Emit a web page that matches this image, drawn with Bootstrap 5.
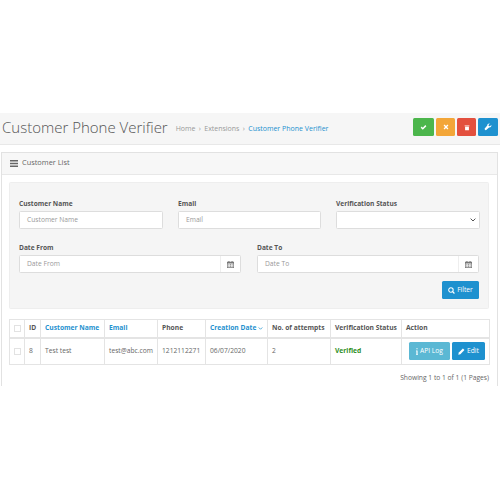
<!DOCTYPE html>
<html lang="en">
<head>
    <meta charset="UTF-8">
    <title>Customer Phone Verifier</title>
    <meta name="viewport" content="width=device-width, initial-scale=1" />
    <link href="https://cdn.jsdelivr.net/npm/bootstrap@5.3.0/dist/css/bootstrap.min.css" rel="stylesheet">
    <style>
        body {
            background-color: #fff;
            font-family: "Open Sans", sans-serif;
            font-size: 6.7px;
            color: #666;
            margin: 0;
            padding: 113px 0 0;
        }
        svg { fill: currentColor; display: inline-block; }
        .page-head {
            height: 32px;
            background-color: #f6f6f6;
            border-bottom: 1px solid #e8e8e8;
            padding: 0 2px;
        }
        .head-left { padding-bottom: 3px; }
        .page-title {
            font-family: "Open Sans", sans-serif;
            font-size: 15px;
            font-weight: 300;
            color: #555;
            margin: 0;
            line-height: 28px;
            white-space: nowrap;
        }
        .crumbs { font-size: 7px; color: #999; margin-left: 8px; padding-top: 4px; white-space: nowrap; }
        .crumbs a { color: #1e91cf; text-decoration: none; }
        .crumbs span { margin: 0 1.5px; }
        .top-btn {
            height: 18px;
            border-radius: 1.5px;
            color: #fff;
            display: flex;
            align-items: center;
            justify-content: center;
        }
        .b-green { width: 21px; background-color: #4cb64c; }
        .b-orange { width: 19px; background-color: #f3a638; }
        .b-red { width: 19px; background-color: #e3503e; }
        .b-blue { width: 20px; background-color: #1e91cf; }
        .top-btns { gap: 2px; padding-top: 5px; }
        .list-panel {
            margin: 7px 2px 0 1px;
            height: 234px;
            border: 1px solid #e2e2e2;
            border-bottom: 0;
        }
        .list-head {
            height: 22px;
            background-color: #f7f7f7;
            border-bottom: 1px solid #e8e8e8;
            padding-left: 8px;
            padding-bottom: 1px;
            font-size: 7.4px;
            color: #666;
            gap: 4px;
        }
        .list-body { padding: 7px 8px 0 7px; }
        .filter-box {
            height: 127px;
            background-color: #f5f5f5;
            border: 1px solid #eee;
            border-radius: 1.5px;
            padding: 16px 9px 0 9px;
        }
        .filter-row-3 { display: grid; grid-template-columns: 144px 143px 144px; column-gap: 15px; }
        .filter-row-2 { display: grid; grid-template-columns: 222px 222px; column-gap: 16px; margin-top: 14px; }
        .field-label { font-size: 6.6px; font-weight: 700; color: #555; line-height: 10px; margin-bottom: 2px; }
        .field-input {
            height: 18px;
            background-color: #fff;
            border: 1px solid #ddd;
            border-radius: 1.5px;
            padding: 0 7px;
            font-size: 6.7px;
            color: #999;
            line-height: 16px;
        }
        .field-select { padding: 0 3px 0 0; color: #555; }
        .field-date { padding: 0; }
        .field-date .date-text { flex: 1; padding: 0 7px; }
        .date-addon { width: 20px; border-left: 1px solid #eee; color: #777; }
        .filter-btn {
            width: 37px;
            height: 18px;
            background-color: #1e91cf;
            color: #fff;
            border-radius: 1.5px;
            font-size: 6.7px;
            gap: 2px;
            margin-top: 8px;
            margin-left: auto;
        }
        .data-table {
            width: 480px;
            margin-top: 10px;
            border-collapse: collapse;
            table-layout: fixed;
            font-size: 6.7px;
            color: #666;
        }
        .data-table th, .data-table td {
            border: 1px solid #e4e4e4;
            padding: 0 4px;
            white-space: nowrap;
        }
        .data-table th { height: 18px; font-weight: 700; color: #555; border-bottom-width: 2px; }
        .data-table td { height: 27px; }
        .data-table th a { color: #1e91cf; text-decoration: none; }
        .tick-box { width: 7px; height: 7px; border: 1px solid #e2e2e2; background-color: #fff; display: block; margin: 0 auto; }
        .state-ok { color: #2f8f1f; font-weight: 700; }
        .act-btn {
            height: 18px;
            color: #fff;
            border-radius: 1.5px;
            gap: 2px;
            font-size: 6.7px;
        }
        .act-log { width: 41px; background-color: #5bb8d4; }
        .act-edit { width: 33px; background-color: #1e91cf; }
        .act-row { gap: 2px; }
        .result-text { text-align: right; margin-top: 8px; font-size: 6.7px; color: #666; }
    </style>
</head>
<body>

<div class="page-head d-flex justify-content-between">
    <div class="head-left d-flex align-items-center">
        <h1 class="page-title">Customer Phone Verifier</h1>
        <div class="crumbs">Home <span>›</span> Extensions <span>›</span> <a href="#">Customer Phone Verifier</a></div>
    </div>
    <div class="d-flex top-btns">
        <div class="top-btn b-green"><svg width="7" height="7" viewBox="0 0 10 10"><path d="M1 5.2 2.5 3.7 4 5.2 7.6 1.6 9.1 3.1 4 8.2z"/></svg></div>
        <div class="top-btn b-orange"><svg width="6" height="6" viewBox="0 0 10 10"><path d="M2.6 1 5 3.4 7.4 1 9 2.6 6.6 5 9 7.4 7.4 9 5 6.6 2.6 9 1 7.4 3.4 5 1 2.6z"/></svg></div>
        <div class="top-btn b-red"><svg width="6" height="7" viewBox="0 0 10 10"><path d="M1 1.5h8v1.5H1zM1.8 3.6h6.4V9.5H1.8z"/></svg></div>
        <div class="top-btn b-blue"><svg width="8" height="8" viewBox="0 0 10 10"><path d="M9.2 2.6 7.4 4.2 5.9 3.8 5.6 2.4 7.3.7C5.6.2 4 1.4 4.1 3.2L.9 6.9C.2 7.7 1.9 9.6 2.8 8.8L6.3 5.6C8.1 5.9 9.6 4.4 9.2 2.6z"/></svg></div>
    </div>
</div>

<div class="list-panel">
    <div class="list-head d-flex align-items-center">
        <svg width="8" height="7" viewBox="0 0 8 7"><path d="M0 0h8v1.5H0zM0 2.75h8v1.5H0zM0 5.5h8V7H0z"/></svg>
        <span>Customer List</span>
    </div>
    <div class="list-body">
        <div class="filter-box">
            <div class="filter-row-3">
                <div>
                    <div class="field-label">Customer Name</div>
                    <div class="field-input">Customer Name</div>
                </div>
                <div>
                    <div class="field-label">Email</div>
                    <div class="field-input">Email</div>
                </div>
                <div>
                    <div class="field-label">Verification Status</div>
                    <div class="field-input field-select d-flex align-items-center justify-content-end">
                        <svg width="6" height="4" viewBox="0 0 6 4"><path d="M.6.6 3 3 5.4.6" fill="none" stroke="currentColor" stroke-width="1"/></svg>
                    </div>
                </div>
            </div>
            <div class="filter-row-2">
                <div>
                    <div class="field-label">Date From</div>
                    <div class="field-input field-date d-flex">
                        <div class="date-text">Date From</div>
                        <div class="date-addon d-flex align-items-center justify-content-center">
                            <svg width="7" height="7" viewBox="0 0 10 10"><path d="M2 0h1.5v1.2h3V0H8v1.2h2V10H0V1.2h2zM1 3.6V9h8V3.6z"/><path d="M2 4.6h1.4V6H2zM4.3 4.6h1.4V6H4.3zM6.6 4.6H8V6H6.6zM2 6.8h1.4v1.4H2zM4.3 6.8h1.4v1.4H4.3zM6.6 6.8H8v1.4H6.6z"/></svg>
                        </div>
                    </div>
                </div>
                <div>
                    <div class="field-label">Date To</div>
                    <div class="field-input field-date d-flex">
                        <div class="date-text">Date To</div>
                        <div class="date-addon d-flex align-items-center justify-content-center">
                            <svg width="7" height="7" viewBox="0 0 10 10"><path d="M2 0h1.5v1.2h3V0H8v1.2h2V10H0V1.2h2zM1 3.6V9h8V3.6z"/><path d="M2 4.6h1.4V6H2zM4.3 4.6h1.4V6H4.3zM6.6 4.6H8V6H6.6zM2 6.8h1.4v1.4H2zM4.3 6.8h1.4v1.4H4.3zM6.6 6.8H8v1.4H6.6z"/></svg>
                        </div>
                    </div>
                </div>
            </div>
            <div class="filter-btn d-flex align-items-center justify-content-center">
                <svg width="7" height="7" viewBox="0 0 10 10"><circle cx="4.2" cy="4.2" r="3.2" fill="none" stroke="currentColor" stroke-width="1.5"/><path d="M6.6 6.6 9.2 9.2" stroke="currentColor" stroke-width="1.8"/></svg>
                <span>Filter</span>
            </div>
        </div>

        <table class="data-table">
            <colgroup>
                <col style="width: 15px"><col style="width: 16px"><col style="width: 64px"><col style="width: 53px"><col style="width: 48px"><col style="width: 62px"><col style="width: 63px"><col style="width: 71px"><col style="width: 88px">
            </colgroup>
            <thead>
                <tr>
                    <th><span class="tick-box"></span></th>
                    <th>ID</th>
                    <th><a href="#">Customer Name</a></th>
                    <th><a href="#">Email</a></th>
                    <th>Phone</th>
                    <th><a href="#">Creation Date <svg width="5" height="3" viewBox="0 0 6 4"><path d="M.6.6 3 3 5.4.6" fill="none" stroke="currentColor"/></svg></a></th>
                    <th>No. of attempts</th>
                    <th>Verification Status</th>
                    <th>Action</th>
                </tr>
            </thead>
            <tbody>
                <tr>
                    <td><span class="tick-box"></span></td>
                    <td>8</td>
                    <td>Test test</td>
                    <td>test@abc.com</td>
                    <td>1212112271</td>
                    <td>06/07/2020</td>
                    <td>2</td>
                    <td class="state-ok">Verified</td>
                    <td>
                        <div class="d-flex justify-content-end act-row">
                            <div class="act-btn act-log d-flex align-items-center justify-content-center"><svg width="2" height="7" viewBox="0 0 3 10"><path d="M.6 0h1.8v1.8H.6zM0 3.4h2.4v5.2H3V10H0V8.6h.6V4.8H0z"/></svg><span>API Log</span></div>
                            <div class="act-btn act-edit d-flex align-items-center justify-content-center"><svg width="7" height="7" viewBox="0 0 10 10"><path d="M7 .8 9.2 3 3.4 8.8.4 9.6l.8-3z"/></svg><span>Edit</span></div>
                        </div>
                    </td>
                </tr>
            </tbody>
        </table>
        <div class="result-text">Showing 1 to 1 of 1 (1 Pages)</div>
    </div>
</div>

<script src="https://cdn.jsdelivr.net/npm/bootstrap@5.3.0/dist/js/bootstrap.bundle.min.js"></script>
</body>
</html>
